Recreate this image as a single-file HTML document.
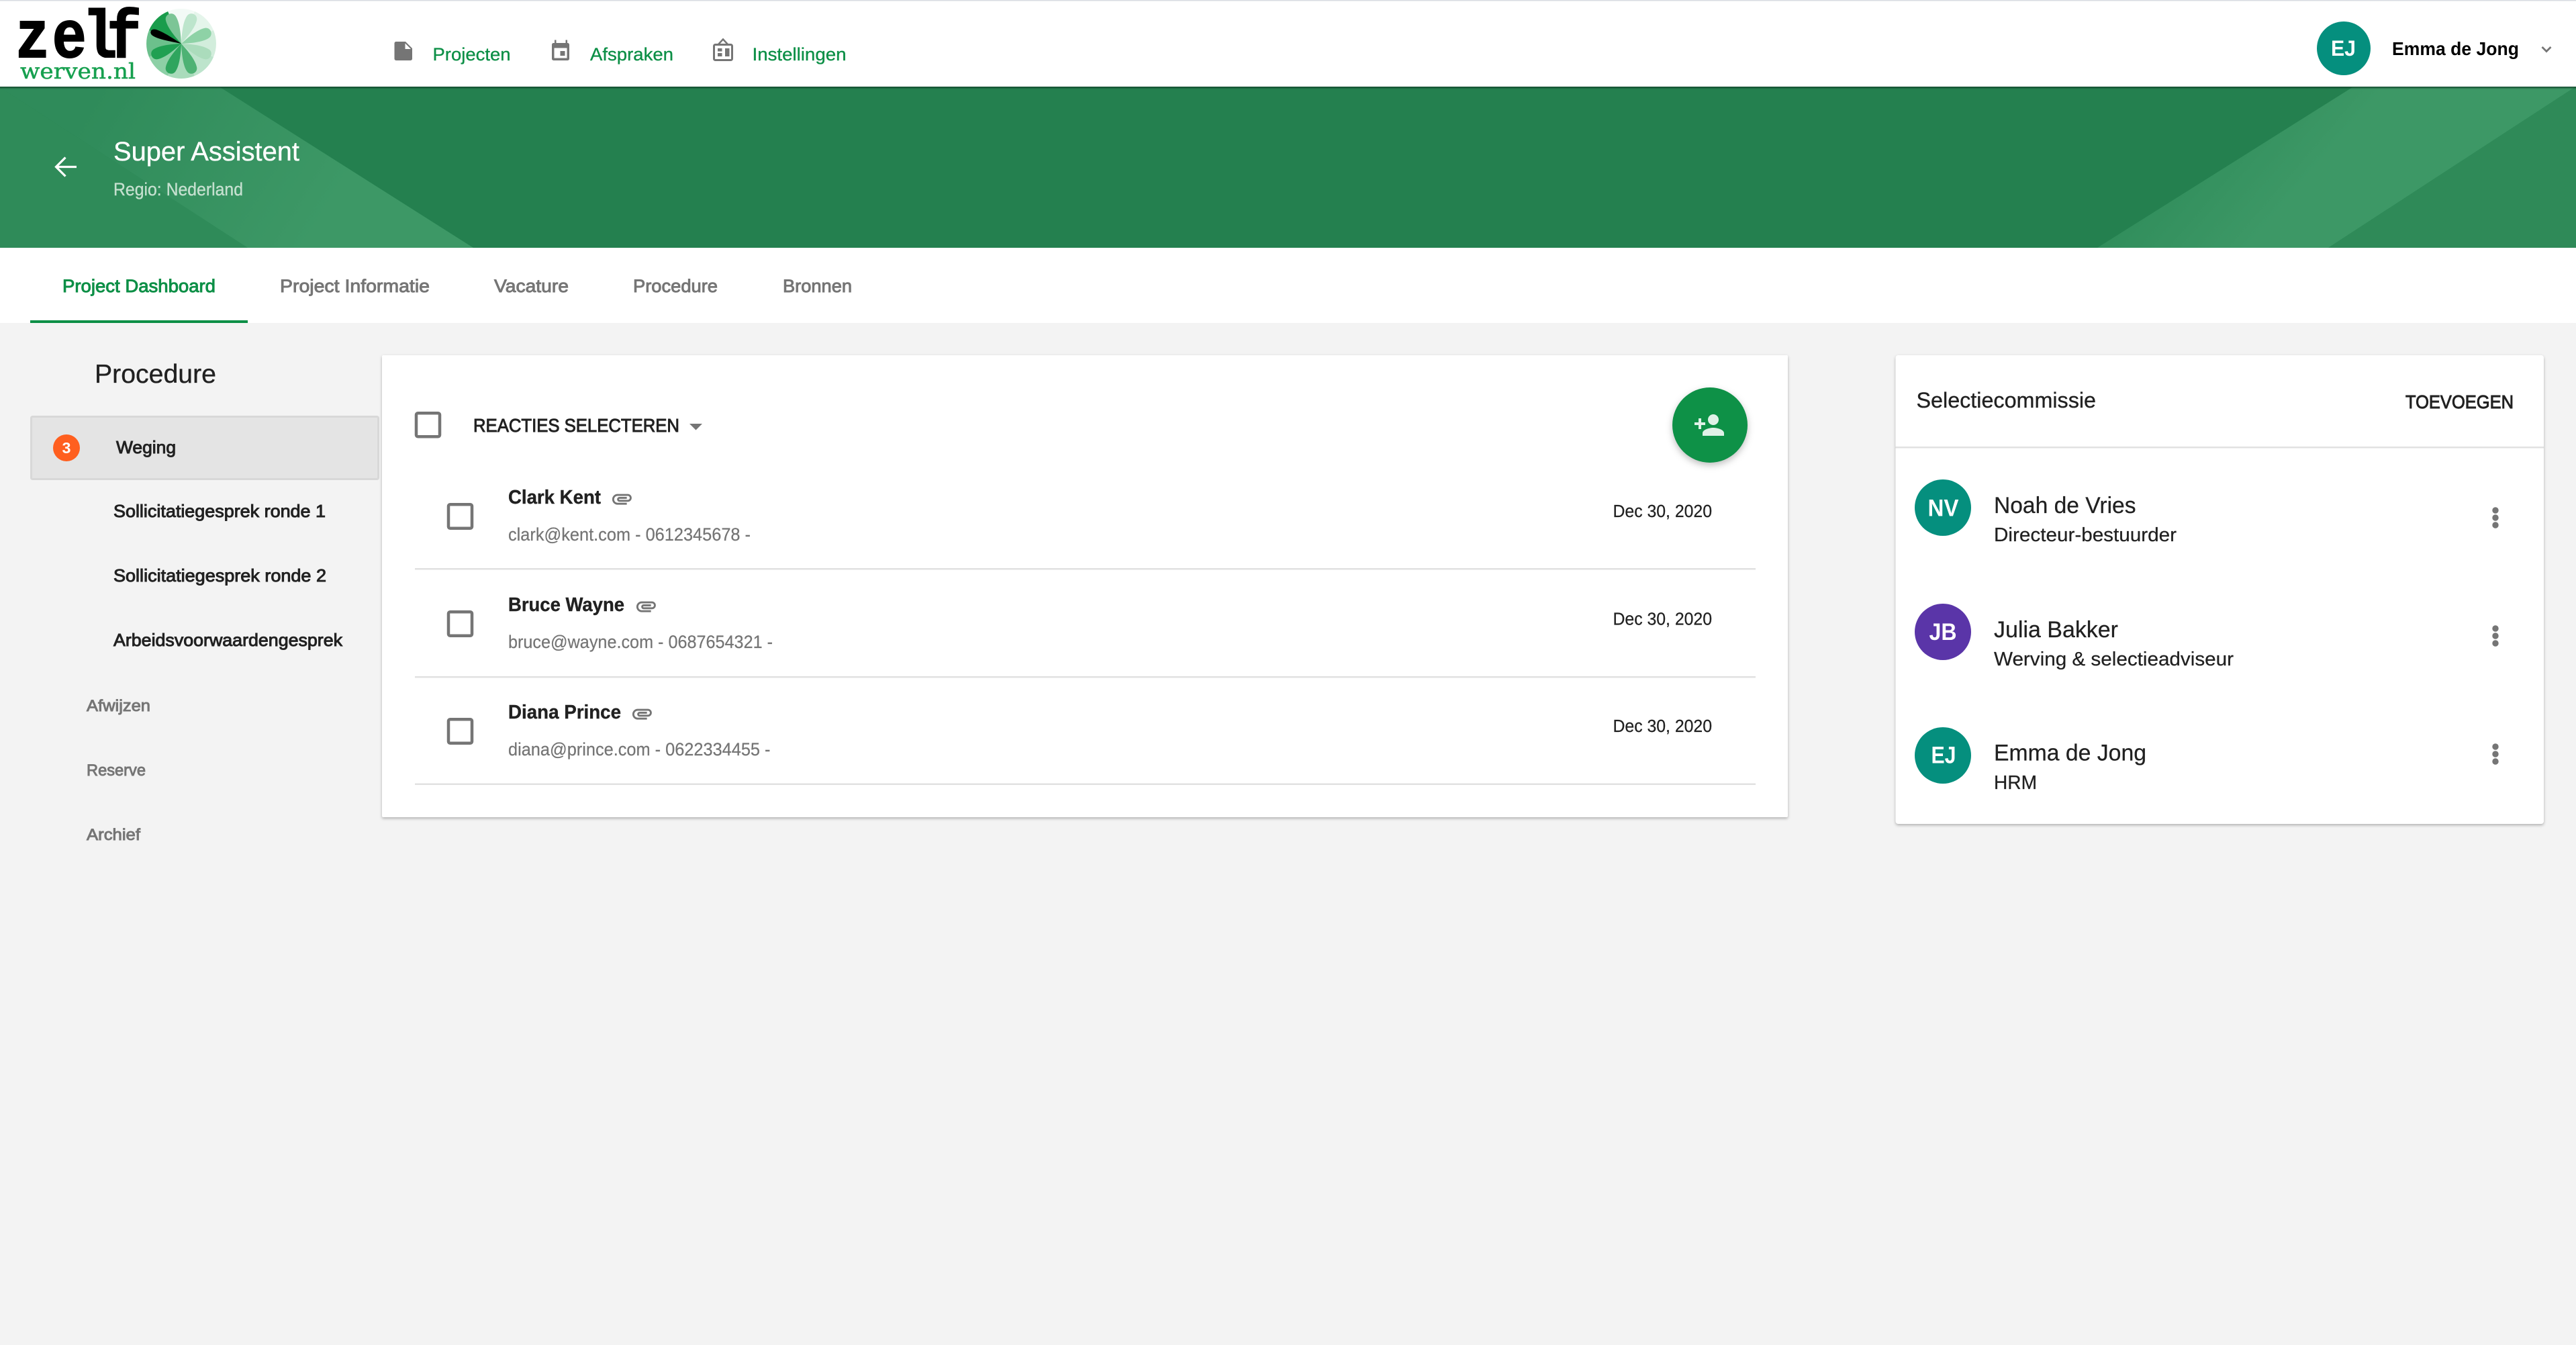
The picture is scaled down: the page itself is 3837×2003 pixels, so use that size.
<!DOCTYPE html>
<html lang="nl"><head><meta charset="utf-8"><title>Super Assistent</title>
<style>
html,body{margin:0;padding:0;background:#f3f3f3;width:3837px;height:2003px;overflow:hidden}
svg{display:block}
text{font-family:"Liberation Sans",Arial,sans-serif;}
.m{stroke-width:.95px;paint-order:stroke}
.n{stroke-width:.35px}
.nav{font-size:27px;fill:#0c8f46;stroke:#0c8f46;stroke-width:.35px}
.tab{font-size:27px;fill:#757575;stroke:#757575}
.side{font-size:26px;fill:#212121;stroke:#212121}
.mut{font-size:24.5px;fill:#757575;stroke:#757575}
.nm{font-size:29px;font-weight:bold;fill:#212121;stroke:#212121;stroke-width:.4px}
.em{font-size:26.5px;fill:#757575;stroke:#757575;stroke-width:.25px}
.dt{font-size:25.5px;fill:#212121;stroke:#212121;stroke-width:.25px}
.av{font-size:35px;fill:#fff;font-weight:bold;text-anchor:start}
.pn{font-size:34px;fill:#212121;stroke:#212121;stroke-width:.25px}
.pr{font-size:29px;fill:#212121;stroke:#212121;stroke-width:.25px}
.cb{fill:none;stroke:#757575;stroke-width:4.5}
.dv{fill:#e1e1e1}
</style></head><body>
<svg xmlns="http://www.w3.org/2000/svg" width="3837" height="2003" viewBox="0 0 3837 2003">
<defs>
<linearGradient id="gl" gradientUnits="userSpaceOnUse" x1="150" y1="130" x2="480" y2="330"><stop offset="0" stop-color="#2f8b5a"/><stop offset="1" stop-color="#3d9866"/></linearGradient>
<linearGradient id="gr" gradientUnits="userSpaceOnUse" x1="3260" y1="190" x2="3400" y2="310"><stop offset="0" stop-color="#308d5b"/><stop offset="1" stop-color="#3d9866"/></linearGradient>
<linearGradient id="hs" x1="0" y1="0" x2="0" y2="1"><stop offset="0" stop-color="#0f3d25" stop-opacity=".85"/><stop offset="1" stop-color="#0f3d25" stop-opacity="0"/></linearGradient>
<path id="clip" d="M2 12.5C2 9.46 4.46 7 7.5 7H18c2.21 0 4 1.79 4 4s-1.79 4-4 4H9.5C8.12 15 7 13.88 7 12.5S8.12 10 9.5 10H17v2H9.41c-.55 0-.55 1 0 1H18c1.1 0 2-.9 2-2s-.9-2-2-2H7.5C5.57 9 4 10.57 4 12.5S5.57 16 7.5 16H17v2H7.5C4.46 18 2 15.54 2 12.5z"/>
<path id="pet" d="M0 0C-5-14-10-30-8-41C-6.500-50 6.500-50 8-41C10-30 5-14 0 0Z"/>
<path id="blk" d="M0 0C-2.500-14-7-32-5.500-43C-4.500-51 4-51 5-43C6-32 2.500-14 0 0Z"/>
</defs>
<rect width="3837" height="2003" fill="#f3f3f3"/>

<!-- header -->
<rect width="3837" height="129" fill="#fff"/>
<rect width="3837" height="1.500" fill="#d8dce2"/>
<text transform="translate(0 85) scale(.85 1)" x="27 91.500 145 187.600" y="0" font-size="100" font-weight="bold" fill="#000" stroke="#000" stroke-width="2" style="font-family:'Liberation Mono',monospace">zelf</text>
<text x="30" y="117" font-size="32" fill="#16a04f" stroke="#16a04f" stroke-width=".5" textLength="172" lengthAdjust="spacingAndGlyphs" style="font-family:'DejaVu Serif',serif">werven.nl</text>
<g transform="translate(270 65)">
<path d="M0 0L-19.900-48A52 52 0 0 1 19.900-48Z" fill="#f3faf6"/>
<path d="M0 0L19.900-48A52 52 0 0 1 48-19.900Z" fill="#e5f5eb"/>
<path d="M0 0L48-19.900A52 52 0 0 1 48 19.900Z" fill="#d2eddc"/>
<path d="M0 0L48 19.900A52 52 0 0 1 19.900 48Z" fill="#bde4cc"/>
<path d="M0 0L19.900 48A52 52 0 0 1-19.900 48Z" fill="#a9dbbb"/>
<path d="M0 0L-19.900 48A52 52 0 0 1-48 19.900Z" fill="#8dd0a6"/>
<path d="M0 0L-48 19.900A52 52 0 0 1-48-19.900Z" fill="#6cc08c"/>
<path d="M0 0L-48-19.900A52 52 0 0 1-19.900-48Z" fill="#1a9c4c"/>
<use href="#pet" transform="rotate(-22.5)" fill="#7cc596"/>
<use href="#pet" transform="rotate(22.5)" fill="#bde5cc"/>
<use href="#pet" transform="rotate(67.5)" fill="#8ed2a6"/>
<use href="#pet" transform="rotate(112.5)" fill="#abdcbc"/>
<use href="#pet" transform="rotate(157.5)" fill="#4eb274"/>
<use href="#pet" transform="rotate(-157.5)" fill="#2fa55e"/>
<use href="#pet" transform="rotate(-112.5)" fill="#1fa052"/>
<use href="#blk" transform="rotate(-67.5)" fill="#000"/>
</g>

<!-- nav -->
<path d="M590 62H604L614 72V87.500A2.500 2.500 0 0 1 611.500 90H590A2.500 2.500 0 0 1 587.500 87.500V64.500A2.500 2.500 0 0 1 590 62Z" fill="#757575"/>
<path d="M603.500 64.500V73H612Z" fill="#fff"/>
<text class="nav" x="644.500" y="90" textLength="116" lengthAdjust="spacingAndGlyphs">Projecten</text>
<path d="M826 59.500h2.500V64h14v-4.500h2.500V64h.5a2.500 2.500 0 0 1 2.500 2.500V87.500a2.500 2.500 0 0 1-2.500 2.500H824.500a2.500 2.500 0 0 1-2.500-2.500V66.500a2.500 2.500 0 0 1 2.500-2.500H826ZM825.500 71.500V86.500H844.500V71.500Z" fill="#757575" fill-rule="evenodd"/>
<rect x="834.500" y="76" width="7" height="7" fill="#757575"/>
<text class="nav" x="879" y="90" textLength="124" lengthAdjust="spacingAndGlyphs">Afspraken</text>
<rect x="1063.500" y="66.500" width="27" height="23" rx="2" fill="none" stroke="#757575" stroke-width="3"/>
<path d="M1070 66L1077 58.500L1084 66" fill="none" stroke="#757575" stroke-width="2.500"/>
<rect x="1069" y="72" width="6.500" height="4.500" fill="#757575"/>
<rect x="1069" y="79" width="6.500" height="5" fill="#757575"/>
<rect x="1080" y="72" width="6.500" height="12" fill="#757575"/>
<text class="nav" x="1120.500" y="90" textLength="140" lengthAdjust="spacingAndGlyphs">Instellingen</text>

<circle cx="3491" cy="72" r="40" fill="#058f7e"/>
<text x="3472" y="83" font-size="32" font-weight="bold" fill="#fff" textLength="37" lengthAdjust="spacingAndGlyphs">EJ</text>
<text x="3563" y="82" font-size="28" font-weight="bold" fill="#000" textLength="189" lengthAdjust="spacingAndGlyphs">Emma de Jong</text>
<path d="M3786.500 70L3793 76.500L3799.500 70" fill="none" stroke="#757575" stroke-width="2.800"/>

<!-- banner -->
<rect y="129" width="3837" height="240" fill="#24804f"/>
<path d="M0 130L369 369H0Z" fill="#2f8b59"/>
<path d="M0 130H328L705 369H369Z" fill="url(#gl)"/>
<path d="M3504 130H3835L3468 369H3124Z" fill="url(#gr)"/>
<path d="M3835 130H3837V369H3468Z" fill="#2f8a58"/>
<rect y="129" width="3837" height="4" fill="url(#hs)"/>
<path d="M114 248.500H84M97.500 234.500L83.500 248.500L97.500 262.500" fill="none" stroke="#fff" stroke-width="3.200"/>
<text class="n" stroke="#fff" x="169" y="239" font-size="40" fill="#fff" textLength="277" lengthAdjust="spacingAndGlyphs">Super Assistent</text>
<text class="n" stroke="#c5e0cf" x="169" y="291" font-size="26.500" fill="#c5e0cf" textLength="193" lengthAdjust="spacingAndGlyphs">Regio: Nederland</text>

<!-- tabs -->
<rect y="369" width="3837" height="112" fill="#fff"/>
<rect x="45" y="477" width="324" height="4" fill="#0c8f46"/>
<text class="tab m" x="93" y="435" style="fill:#0c8f46;stroke:#0c8f46" textLength="228" lengthAdjust="spacingAndGlyphs">Project Dashboard</text>
<text class="tab m" x="417" y="435" textLength="223" lengthAdjust="spacingAndGlyphs">Project Informatie</text>
<text class="tab m" x="736" y="435" textLength="111" lengthAdjust="spacingAndGlyphs">Vacature</text>
<text class="tab m" x="943" y="435" textLength="126" lengthAdjust="spacingAndGlyphs">Procedure</text>
<text class="tab m" x="1166" y="435" textLength="103" lengthAdjust="spacingAndGlyphs">Bronnen</text>

<!-- sidebar -->
<text class="n" stroke="#212121" x="141" y="570" font-size="39" fill="#212121" textLength="181" lengthAdjust="spacingAndGlyphs">Procedure</text>
<rect x="46.500" y="620.500" width="517" height="93" rx="2" fill="#e4e4e4" stroke="#d8d8d8" stroke-width="3"/>
<circle cx="99" cy="667" r="20" fill="#ff5f1f"/>
<text x="92.500" y="675" font-size="23" font-weight="bold" fill="#fff" textLength="13" lengthAdjust="spacingAndGlyphs">3</text>
<text class="side m" x="173" y="675" textLength="89" lengthAdjust="spacingAndGlyphs">Weging</text>
<text class="side m" x="169" y="770" textLength="316" lengthAdjust="spacingAndGlyphs">Sollicitatiegesprek ronde 1</text>
<text class="side m" x="169" y="866" textLength="317" lengthAdjust="spacingAndGlyphs">Sollicitatiegesprek ronde 2</text>
<text class="side m" x="169" y="962" textLength="341" lengthAdjust="spacingAndGlyphs">Arbeidsvoorwaardengesprek</text>
<text class="mut m" x="129" y="1059" textLength="95" lengthAdjust="spacingAndGlyphs">Afwijzen</text>
<text class="mut m" x="129" y="1155" textLength="88" lengthAdjust="spacingAndGlyphs">Reserve</text>
<text class="mut m" x="129" y="1251" textLength="80" lengthAdjust="spacingAndGlyphs">Archief</text>

<!-- main card -->
<rect x="569" y="529" width="2094" height="688" rx="2" fill="#fff" style="filter:drop-shadow(0 2px 2px rgba(0,0,0,.28))"/>
<rect class="cb" x="620" y="615.250" width="35" height="35" rx="2.500"/>
<text class="m" x="705" y="643" font-size="27.500" fill="#212121" stroke="#212121" textLength="307" lengthAdjust="spacingAndGlyphs">REACTIES SELECTEREN</text>
<path d="M1027 631H1046L1036.500 640.500Z" fill="#757575"/>
<circle cx="2547" cy="633" r="56" fill="#0e9147" style="filter:drop-shadow(0 4px 5px rgba(0,0,0,.25))"/>
<path transform="translate(2522 609) scale(2)" fill="#dff1e7" d="M15 12c2.210 0 4-1.790 4-4s-1.790-4-4-4-4 1.790-4 4 1.790 4 4 4zm-9-2V7H4v3H1v2h3v3h2v-3h3v-2H6zm9 4c-2.670 0-8 1.340-8 4v2h16v-2c0-2.660-5.330-4-8-4z"/>

<rect class="cb" x="668" y="751.250" width="35" height="35.500" rx="2.500"/>
<text class="nm" x="757" y="750" textLength="138" lengthAdjust="spacingAndGlyphs">Clark Kent</text>
<use href="#clip" transform="translate(909 725.500) scale(1.450)" fill="#757575"/>
<text class="em" x="757" y="805" textLength="361" lengthAdjust="spacingAndGlyphs">clark@kent.com - 0612345678 -</text>
<text class="dt" x="2402.500" y="770" textLength="147.500" lengthAdjust="spacingAndGlyphs">Dec 30, 2020</text>
<rect class="dv" x="618" y="846" width="1997" height="2.500"/>

<rect class="cb" x="668" y="911.250" width="35" height="35.500" rx="2.500"/>
<text class="nm" x="757" y="910" textLength="173" lengthAdjust="spacingAndGlyphs">Bruce Wayne</text>
<use href="#clip" transform="translate(945 885.500) scale(1.450)" fill="#757575"/>
<text class="em" x="757" y="965" textLength="394" lengthAdjust="spacingAndGlyphs">bruce@wayne.com - 0687654321 -</text>
<text class="dt" x="2402.500" y="930.500" textLength="147.500" lengthAdjust="spacingAndGlyphs">Dec 30, 2020</text>
<rect class="dv" x="618" y="1007" width="1997" height="2.500"/>

<rect class="cb" x="668" y="1071.250" width="35" height="35.500" rx="2.500"/>
<text class="nm" x="757" y="1070" textLength="168" lengthAdjust="spacingAndGlyphs">Diana Prince</text>
<use href="#clip" transform="translate(939 1045.500) scale(1.450)" fill="#757575"/>
<text class="em" x="757" y="1125" textLength="390.500" lengthAdjust="spacingAndGlyphs">diana@prince.com - 0622334455 -</text>
<text class="dt" x="2402.500" y="1090" textLength="147.500" lengthAdjust="spacingAndGlyphs">Dec 30, 2020</text>
<rect class="dv" x="618" y="1166.500" width="1997" height="2.500"/>

<!-- right card -->
<rect x="2823.500" y="529" width="965.500" height="698" rx="4" fill="#fff" style="filter:drop-shadow(0 2px 2px rgba(0,0,0,.28))"/>
<text class="n" stroke="#212121" x="2854.500" y="607" font-size="32" fill="#212121" textLength="267.500" lengthAdjust="spacingAndGlyphs">Selectiecommissie</text>
<text class="m" x="3583" y="608" font-size="28" fill="#212121" stroke="#212121" textLength="161" lengthAdjust="spacingAndGlyphs">TOEVOEGEN</text>
<rect class="dv" x="2823.500" y="665" width="965.500" height="2.500"/>

<circle cx="2894" cy="756" r="42" fill="#058f7e"/>
<text class="av" x="2871.500" y="768.500" textLength="46" lengthAdjust="spacingAndGlyphs">NV</text>
<text class="pn" x="2970" y="764" textLength="211.500" lengthAdjust="spacingAndGlyphs">Noah de Vries</text>
<text class="pr" x="2970" y="806" textLength="272" lengthAdjust="spacingAndGlyphs">Directeur-bestuurder</text>
<circle cx="3717" cy="760" r="4.700" fill="#757575"/><circle cx="3717" cy="771" r="4.700" fill="#757575"/><circle cx="3717" cy="782" r="4.700" fill="#757575"/>

<circle cx="2894" cy="941" r="42" fill="#5a35a8"/>
<text class="av" x="2873.500" y="953" textLength="41" lengthAdjust="spacingAndGlyphs">JB</text>
<text class="pn" x="2970" y="949" textLength="185" lengthAdjust="spacingAndGlyphs">Julia Bakker</text>
<text class="pr" x="2970" y="991" textLength="357" lengthAdjust="spacingAndGlyphs">Werving &amp; selectieadviseur</text>
<circle cx="3717" cy="936" r="4.700" fill="#757575"/><circle cx="3717" cy="947" r="4.700" fill="#757575"/><circle cx="3717" cy="958" r="4.700" fill="#757575"/>

<circle cx="2894" cy="1125" r="42" fill="#058f7e"/>
<text class="av" x="2876.500" y="1136.500" textLength="37" lengthAdjust="spacingAndGlyphs">EJ</text>
<text class="pn" x="2970" y="1132.500" textLength="227" lengthAdjust="spacingAndGlyphs">Emma de Jong</text>
<text class="pr" x="2970" y="1175" textLength="64" lengthAdjust="spacingAndGlyphs">HRM</text>
<circle cx="3717" cy="1112" r="4.700" fill="#757575"/><circle cx="3717" cy="1123" r="4.700" fill="#757575"/><circle cx="3717" cy="1134" r="4.700" fill="#757575"/>
</svg>
</body></html>
